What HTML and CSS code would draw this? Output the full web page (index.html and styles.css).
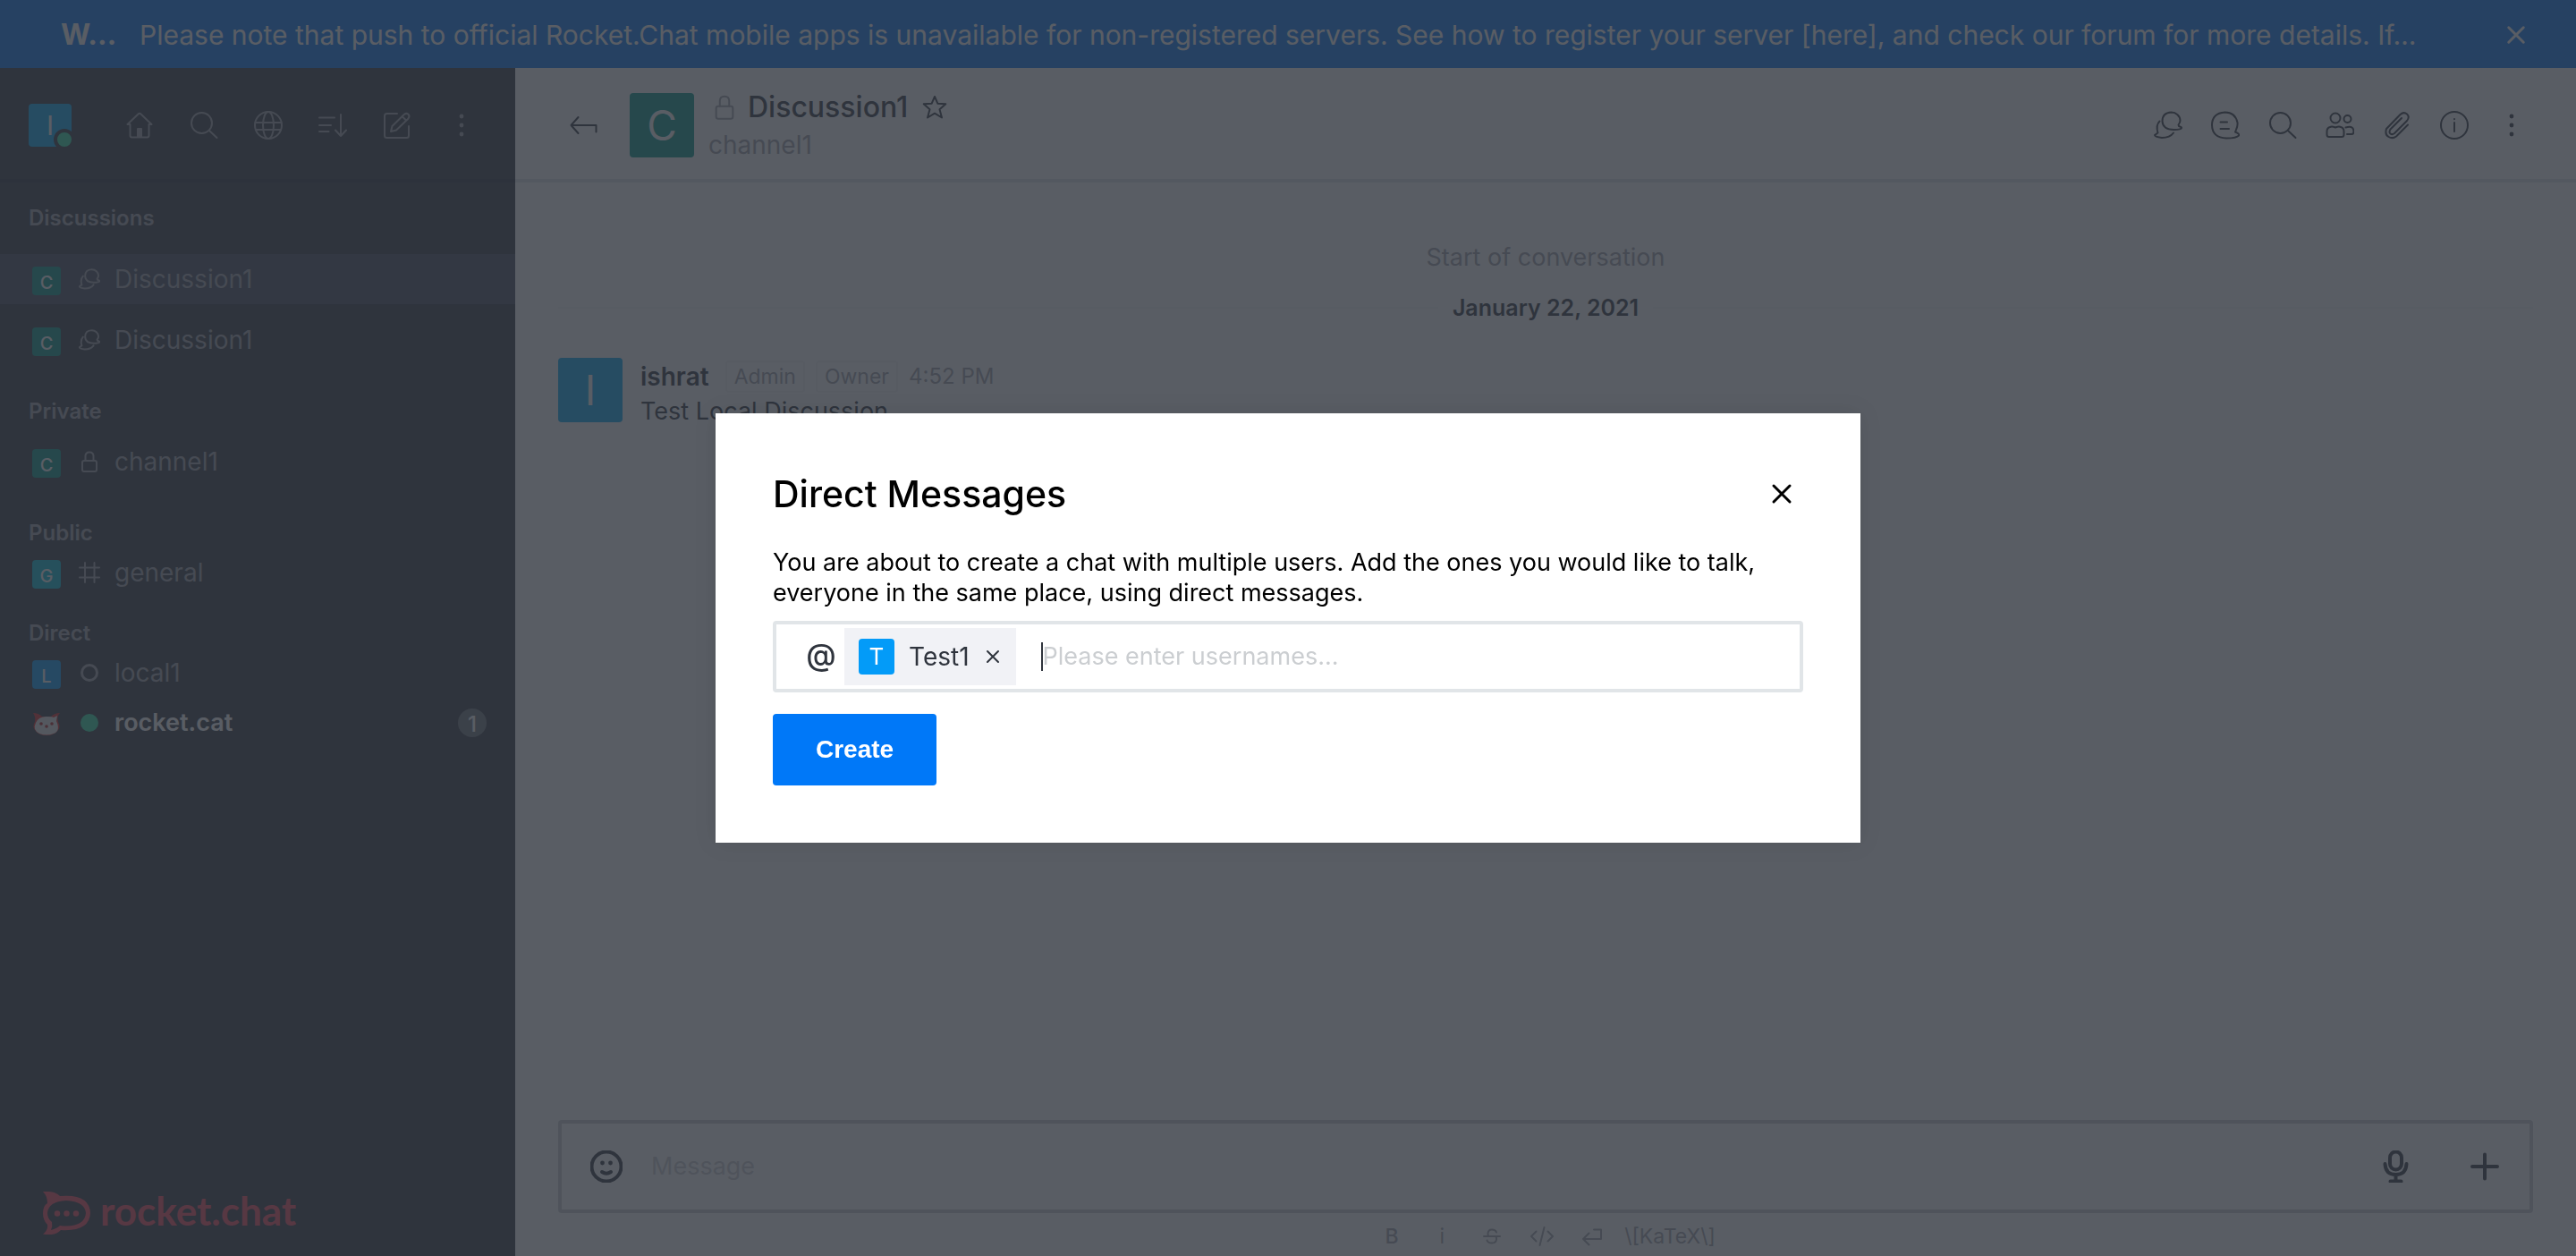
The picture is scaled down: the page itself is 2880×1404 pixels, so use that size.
FILE: index.html
```html
<!DOCTYPE html>
<html lang="en">
<head>
<meta charset="utf-8">
<title>Discussion1 - Rocket.Chat</title>
<link rel="stylesheet" href="styles.css">
</head>
<body>
<svg class="sprite" aria-hidden="true">
  <symbol id="i-home" viewBox="0 0 32 32"><path d="M5.500 15H2.500L14.500 3.500q1.500-1.400 3 0L29.500 15h-3v12.500q0 2-2 2h-17q-2 0-2-2z"/><path d="M14 29v-9h4v9z" fill="currentColor"/></symbol>
  <symbol id="i-search" viewBox="0 0 32 32"><circle cx="13.500" cy="13.500" r="11.500"/><path d="M22 22l8.500 8"/></symbol>
  <symbol id="i-globe" viewBox="0 0 32 32"><circle cx="16" cy="16" r="15"/><ellipse cx="16" cy="16" rx="6" ry="15"/><path d="M1.500 13H30.500M2 21H30"/></symbol>
  <symbol id="i-sort" viewBox="0 0 32 32"><path d="M1 7.500H18M1 16H14M1 23H11.500M25 4V28M19 21.500L25 28l6-6.500"/></symbol>
  <symbol id="i-edit" viewBox="0 0 32 32"><path d="M16 3H4.500Q2 3 2 5.500v22Q2 30 4.500 30h22q2.500 0 2.500-2.500V17"/><path d="M9 23l1.500-6L24 3.800q2.500-1.800 4.500 0t0 4.700L15 21.500zM22 6.500l4 4"/></symbol>
  <symbol id="i-kebab" viewBox="0 0 32 32"><g fill="currentColor" stroke="none"><circle cx="16" cy="6" r="2.400"/><circle cx="16" cy="16" r="2.400"/><circle cx="16" cy="26" r="2.400"/></g></symbol>
  <symbol id="i-chat" viewBox="0 0 32 32"><path d="M27.500 15.500Q29.500 13 29.500 10.800A10 9.500 0 0 0 19.500 1.500Q9.500 2 9.500 11.500q.5 9.500 13 9.500 8 0 8.500-2 0-1-3-2z"/><path d="M6.500 11.500Q2 16 4.500 24.500l-3.500 2.500q0 2 8 3 9 0 13-5.500"/></symbol>
  <symbol id="i-thread" viewBox="0 0 32 32"><path d="M28 21Q30 17 29.500 13 27 1.500 15.500 1.500 1 2.500 1 16 1.500 30 17 30.500q12 0 14.500-3.500 0-1.500-4.500-3.500zM10.500 12.500h7.500M10.500 20h9.500"/></symbol>
  <symbol id="i-team" viewBox="0 0 32 32"><circle cx="11" cy="8" r="5.500"/><circle cx="24.500" cy="9" r="4"/><path d="M5 18q2-1 6 .5 4-1.500 6-.5 3.500 1 3.500 5v3.500q0 2.500-2.500 2.500H4q-2.500 0-2.500-2.500V23q0-4 3.500-5zM22.500 18.500q5-1.500 7 0t2 4.500q0 3-2.500 3H24"/></symbol>
  <symbol id="i-clip" viewBox="0 0 32 32"><path d="M28 15.500L15 28.500Q11 31.500 6.500 29T4 20L19.500 4q4-3.500 7.500-.5t0 7.500L13 25q-2.500 2-4.500.5t0-5L21 8"/></symbol>
  <symbol id="i-info" viewBox="0 0 32 32"><circle cx="16" cy="16" r="15"/><path d="M16 13v10M16 9v.2"/></symbol>
  <symbol id="i-lock" viewBox="0 0 24 24"><rect x="4" y="11" width="16" height="12" rx="2"/><path d="M7.500 11V6q0-4.500 4.500-4.500T16.500 6v5"/></symbol>
  <symbol id="i-hash" viewBox="0 0 24 24"><path d="M7 1v22M17.500 1v22M1 6.500h22M1 17.500h22"/></symbol>
  <symbol id="i-cross" viewBox="0 0 24 24"><path d="M3 3l18 18M21 3L3 21"/></symbol>
  <symbol id="i-back" viewBox="0 0 32 32"><path d="M10.500 7L2.500 16l8 9M2.500 16H30.500v7.500"/></symbol>
  <symbol id="i-star" viewBox="0 0 28 28"><path d="M14 2l3.300 7.700 9 .5-6.800 6 2.500 9.300-8-4.800-8 4.800 2.500-9.300-6.800-6 9-.5z"/></symbol>
  <symbol id="i-smile" viewBox="0 0 36 36"><circle cx="18" cy="18" r="16.500"/><path d="M13 24q5 3.500 10 0"/><g fill="currentColor" stroke="none"><circle cx="13.500" cy="14" r="2.400"/><circle cx="22.500" cy="14" r="2.400"/></g></symbol>
  <symbol id="i-mic" viewBox="0 0 36 36"><rect x="12" y="1.500" width="13" height="20" rx="6.500"/><path d="M6.500 15q.5 12 12 12t12-12M18.500 27v7M12.500 34.500h12"/></symbol>
  <symbol id="i-plus" viewBox="0 0 36 36"><path d="M18 4.500v27M4 18h28"/></symbol>
  <symbol id="i-code" viewBox="0 0 28 24"><path d="M7.500 6.500L2 12l5.500 5.500M20.500 6.500L26 12l-5.500 5.500M16.500 2l-5 20"/></symbol>
  <symbol id="i-enter" viewBox="0 0 24 24"><path d="M14 4.500h8V15H2M8.500 8.500L2 15l6.500 6.500"/></symbol>
  <symbol id="i-strike" viewBox="0 0 20 20"><path d="M15 5.500Q14 2.500 10 2.500T5.500 6.500 9 10M4.500 14.500q1 3 5.500 3t5-4-2.500-3.500M1 10h18"/></symbol>
</svg>

<div class="app">
  <div class="banner" role="status">
    <strong>W…</strong>
    <p>Please note that push to official Rocket.Chat mobile apps is unavailable for non-registered servers. See how to register your server [here], and check our forum for more details. If…</p>
    <button class="icon-btn" aria-label="Close banner"><svg class="ico ico-close"><use href="#i-cross"/></svg></button>
  </div>

  <div class="body">
    <aside class="sidebar">
      <header class="side-head">
        <div class="me"><span class="avatar avatar-48 blue">I</span><i class="presence"></i></div>
        <nav class="side-tools">
          <button class="icon-btn" aria-label="Home"><svg class="ico ico-32"><use href="#i-home"/></svg></button>
          <button class="icon-btn" aria-label="Search"><svg class="ico ico-32"><use href="#i-search"/></svg></button>
          <button class="icon-btn" aria-label="Directory"><svg class="ico ico-32"><use href="#i-globe"/></svg></button>
          <button class="icon-btn" aria-label="Sort"><svg class="ico ico-32"><use href="#i-sort"/></svg></button>
          <button class="icon-btn" aria-label="Create new"><svg class="ico ico-32"><use href="#i-edit"/></svg></button>
          <button class="icon-btn" aria-label="Options"><svg class="ico ico-32"><use href="#i-kebab"/></svg></button>
        </nav>
      </header>

      <div class="rooms">
        <section class="group first">
          <h3>Discussions</h3>
          <a class="room active" href="#d1"><span class="avatar avatar-32 teal">C</span><svg class="ico ico-24"><use href="#i-chat"/></svg><span>Discussion1</span></a>
          <a class="room" href="#d2"><span class="avatar avatar-32 teal">C</span><svg class="ico ico-24"><use href="#i-chat"/></svg><span>Discussion1</span></a>
        </section>
        <section class="group wide">
          <h3 class="spaced">Private</h3>
          <a class="room" href="#c1"><span class="avatar avatar-32 teal">C</span><svg class="ico ico-24"><use href="#i-lock"/></svg><span>channel1</span></a>
        </section>
        <section class="group wide">
          <h3>Public</h3>
          <a class="room" href="#general"><span class="avatar avatar-32 cyan">G</span><svg class="ico ico-24"><use href="#i-hash"/></svg><span>general</span></a>
        </section>
        <section class="group">
          <h3>Direct</h3>
          <a class="room" href="#local1"><span class="avatar avatar-32 azure">L</span><i class="dot offline"></i><span>local1</span></a>
          <a class="room unread" href="#cat">
            <svg class="cat" viewBox="0 0 32 32"><path d="M1 3q6 0 10 4h10q4-4 10-4-4 4-2 10 3 6 0 9-4 6-13 6t-13-6q-3-4 0-9 1-6-2-10z" fill="#db2323"/><path d="M16 7q6 0 8 1l4-2-1 6q5 11-3 14-8 3-16 0-8-4-4-12 3-7 12-7z" fill="#e6e6e6"/><g fill="#b31e1e"><circle cx="10" cy="15" r="1.800"/><circle cx="16" cy="18" r="1.800"/><circle cx="22" cy="15" r="1.800"/></g></svg>
            <i class="dot online"></i><span>rocket.cat</span><b class="badge">1</b></a>
        </section>
      </div>

      <footer class="brand">
        <svg viewBox="0 0 54 48"><path d="M0 0q13-1 19 5Q52 2 53 24 52 45 20 43 13 50 0 47.500 6 43 5 37 0 32 0 24T5 13Q5 5 0 0z" fill="currentColor"/><path d="M26 10q21 1 22 14-1 14-22 14.500-3 0-7-.5-3 3-10 5 2-4 1-9-5-4-5-10 1-13 21-14z" fill="#2f343d"/><g fill="currentColor"><circle cx="16" cy="24.500" r="3.200"/><circle cx="26.500" cy="24.500" r="3.200"/><circle cx="37" cy="24.500" r="3.200"/></g></svg>
        <span>rocket.chat</span>
      </footer>
    </aside>

    <main class="main">
      <header class="room-head">
        <button class="icon-btn back" aria-label="Back to channel"><svg class="ico ico-32"><use href="#i-back"/></svg></button>
        <span class="avatar avatar-72 teal">C</span>
        <div class="room-title">
          <h1><svg class="ico ico-28 muted"><use href="#i-lock"/></svg><span>Discussion1</span><button class="icon-btn" aria-label="Favorite"><svg class="ico ico-28"><use href="#i-star"/></svg></button></h1>
          <a href="#c1">channel1</a>
        </div>
        <nav class="room-tools">
          <button class="icon-btn" aria-label="Discussions"><svg class="ico ico-32"><use href="#i-chat"/></svg></button>
          <button class="icon-btn" aria-label="Threads"><svg class="ico ico-32"><use href="#i-thread"/></svg></button>
          <button class="icon-btn" aria-label="Search messages"><svg class="ico ico-32"><use href="#i-search"/></svg></button>
          <button class="icon-btn" aria-label="Members"><svg class="ico ico-32"><use href="#i-team"/></svg></button>
          <button class="icon-btn" aria-label="Files"><svg class="ico ico-32"><use href="#i-clip"/></svg></button>
          <button class="icon-btn" aria-label="Room information"><svg class="ico ico-32"><use href="#i-info"/></svg></button>
          <button class="icon-btn" aria-label="More"><svg class="ico ico-32"><use href="#i-kebab"/></svg></button>
        </nav>
      </header>

      <div class="messages">
        <p class="start">Start of conversation</p>
        <div class="day"><span>January 22, 2021</span></div>
        <article class="message">
          <span class="avatar avatar-72 blue">I</span>
          <div>
            <div class="meta"><strong>ishrat</strong><span class="tag">Admin</span><span class="tag">Owner</span><time>4:52 PM</time></div>
            <p>Test Local Discussion</p>
          </div>
        </article>
      </div>

      <footer class="composer">
        <div class="compose-box">
          <button class="icon-btn" aria-label="Emoji"><svg class="ico ico-36"><use href="#i-smile"/></svg></button>
          <input type="text" placeholder="Message" aria-label="Message">
          <button class="icon-btn" aria-label="Record audio"><svg class="ico ico-36"><use href="#i-mic"/></svg></button>
          <button class="icon-btn plus" aria-label="Add"><svg class="ico ico-36"><use href="#i-plus"/></svg></button>
        </div>
        <div class="format">
          <button aria-label="Bold"><b>B</b></button>
          <button aria-label="Italic">i</button>
          <button aria-label="Strike"><svg class="ico ico-20"><use href="#i-strike"/></svg></button>
          <button aria-label="Code"><svg class="ico ico-28"><use href="#i-code"/></svg></button>
          <button aria-label="Multi line"><svg class="ico ico-24"><use href="#i-enter"/></svg></button>
          <a class="katex" href="#katex">\[KaTeX\]</a>
        </div>
      </footer>
    </main>
  </div>
</div>

<div class="overlay">
  <form class="modal" role="dialog" aria-labelledby="dm-title">
    <header><h2 id="dm-title">Direct Messages</h2><button type="button" class="icon-btn" aria-label="Close"><svg class="ico ico-24"><use href="#i-cross"/></svg></button></header>
    <label for="users">You are about to create a chat with multiple users. Add the ones you would like to talk, everyone in the same place, using direct messages.</label>
    <div class="user-box">
      <span class="at">@</span>
      <span class="chip"><span class="avatar avatar-40 azure">T</span><span>Test1</span><button type="button" class="icon-btn" aria-label="Remove Test1"><svg class="ico ico-x"><use href="#i-cross"/></svg></button></span>
      <i class="caret"></i>
      <input id="users" type="text" placeholder="Please enter usernames...">
    </div>
    <button type="button" class="create">Create</button>
  </form>
</div>
</body>
</html>
```

FILE: styles.css
```css
*, *::before, *::after { box-sizing: border-box; }
body, h1, h2, h3, p { margin: 0; }
body { font: 400 28px/36px Inter, "Liberation Sans", sans-serif; color: #2f343d; background: #fff; }
a { color: inherit; text-decoration: none; }
button, input { font: inherit; color: inherit; border: 0; background: none; padding: 0; margin: 0; outline: 0; }
input { font-size: 27px; }
input::placeholder { color: #cbced1; opacity: 1; }

.sprite { position: absolute; width: 0; height: 0; }
.sprite path, .sprite circle, .sprite rect, .sprite ellipse { vector-effect: non-scaling-stroke; }
.ico { display: block; flex: none; fill: none; stroke: currentColor; stroke-width: 2; stroke-linecap: round; stroke-linejoin: round; overflow: visible; }
.ico-20 { width: 20px; height: 20px; }
.ico-24 { width: 24px; height: 24px; }
.ico-28 { width: 28px; height: 28px; }
.ico-32 { width: 32px; height: 32px; }
.ico-36 { width: 36px; height: 36px; stroke-width: 4; }
.ico-x { width: 16px; height: 16px; }
.ico-close { width: 22px; height: 22px; stroke-width: 3; }
.icon-btn { display: grid; place-items: center; flex: none; }
.muted { color: #9ea2a8; }

.avatar { display: grid; place-items: center; flex: none; border-radius: 4px; color: #fff; }
.avatar-32 { width: 32px; height: 32px; font-size: 20px; font-weight: 500; }
.avatar-40 { width: 40px; height: 40px; font-size: 26px; }
.avatar-48 { width: 48px; height: 48px; font-size: 30px; }
.avatar-72 { width: 72px; height: 72px; font-size: 46px; }
.blue { background: #03a9f4; }
.teal { background: #009688; }
.cyan { background: #00bcd4; }
.azure { background: #039bf8; }

.app { display: flex; flex-direction: column; height: 100vh; }
.body { display: flex; flex: 1; min-height: 0; }

.banner { display: flex; align-items: center; height: 76px; flex: none; padding: 2px 56px 0 68px; background: #0076f6; color: #fff; font-size: 30px; line-height: 40px; }
.banner strong { width: 88px; flex: none; font-size: 32px; }
.banner p { flex: 1; min-width: 0; white-space: nowrap; }
.banner .icon-btn { margin-left: 52px; }

.sidebar { display: flex; flex-direction: column; width: 576px; flex: none; background: #2f343d; color: #9ea2a8; }
.side-head { display: flex; align-items: center; height: 128px; padding: 4px 24px 0 32px; border-bottom: 4px solid #262b3a; }
.me { position: relative; }
.presence { position: absolute; right: -4px; bottom: -4px; width: 24px; height: 24px; border: 4px solid #2f343d; border-radius: 50%; background: #2de0a5; }
.side-tools { display: flex; margin-left: 40px; }
.side-tools .icon-btn { width: 72px; height: 56px; }
.rooms { flex: 1; padding-top: 24px; }
.group { margin-top: 24px; }
.group h3 { padding: 0 32px; font-size: 24px; line-height: 32px; font-weight: 600; }
.group.wide { margin-top: 36px; }
.group .spaced { margin-bottom: 12px; }
.group.first { margin-top: 0; }
.first h3 { margin-bottom: 24px; }
.first .room + .room { margin-top: 12px; }
.room { display: flex; align-items: center; height: 56px; padding: 0 32px 0 36px; }
.room .avatar, .cat { margin-top: 4px; }
.room .ico { margin: 0 16px 0 20px; }
.active { background: #414859; }
.dot { width: 20px; height: 20px; border-radius: 50%; margin: 0 18px 0 22px; }
.offline { border: 3px solid #9ea2a8; }
.online { background: #2de0a5; }
.cat { width: 32px; height: 32px; flex: none; }
.unread { color: #fff; font-size: 27px; font-weight: 600; }
.badge { display: grid; place-items: center; width: 32px; height: 32px; margin-left: auto; border-radius: 50%; background: #6c727a; font-size: 24px; font-weight: 500; }
.brand { display: flex; align-items: center; gap: 10px; height: 96px; padding: 0 48px; color: #f5455c; font: 700 44px/48px Lato, sans-serif; }
.brand svg { width: 54px; height: 48px; }
.brand span { padding-bottom: 6px; }

.main { display: flex; flex-direction: column; flex: 1; min-width: 0; }
.room-head { display: flex; align-items: center; height: 128px; flex: none; padding: 4px 40px 0 56px; border-bottom: 4px solid #e1e5e8; }
.room-head .back { width: 40px; margin-right: 32px; }
.room-title { margin-left: 16px; }
.room-title h1 { display: flex; align-items: center; font-size: 32px; line-height: 40px; font-weight: 500; }
.room-title h1 span { margin: 0 16px 0 12px; }
.room-title h1 .muted { margin-left: 4px; }
.room-title a { display: block; margin-top: 4px; color: #9ea2a8; }
.room-tools { display: flex; margin-left: auto; }
.room-tools .icon-btn { width: 64px; height: 64px; }

.messages { flex: 1; padding: 66px 48px 0; font-size: 27px; }
.start { text-align: center; color: #9ea2a8; }
.day { display: flex; align-items: center; margin-top: 20px; font-size: 25px; font-weight: 600; }
.day::before, .day::after { content: ""; flex: 1; height: 2px; background: #f6f7f9; }
.day span { padding: 0 16px; }
.message { display: flex; gap: 20px; margin-top: 38px; }
.meta { display: flex; align-items: center; height: 42px; }
.meta strong { font-size: 28px; font-weight: 600; margin-right: 18px; }
.tag { padding: 0 8px; margin-right: 12px; border: 2px solid #f3f4f6; border-radius: 4px; color: #9ea2a8; font-size: 23px; line-height: 32px; }
.meta time { color: #9ea2a8; font-size: 24px; }

.composer { padding: 0 48px; }
.compose-box { display: flex; align-items: center; height: 104px; padding: 0 32px; border: 4px solid #cbced1; border-radius: 4px; }
.compose-box input { flex: 1; min-width: 0; margin: 0 32px; }
.compose-box .plus { margin-left: 64px; }
.format { display: flex; align-items: center; justify-content: center; height: 48px; padding: 4px 10px 0 0; color: #9ea2a8; font-size: 23px; }
.format button { display: grid; place-items: center; width: 56px; }
.format b { font-weight: 500; }
.katex { margin-left: 8px; }

.overlay { position: fixed; inset: 0; display: grid; place-items: center; background: rgba(47, 52, 61, .8); }
.modal { width: 1280px; padding: 64px; background: #fff; color: #000; box-shadow: 0 0 24px rgba(0, 0, 0, .1); }
.modal header { display: flex; align-items: center; justify-content: space-between; height: 52px; padding-right: 12px; }
.modal h2 { font-size: 41px; line-height: 52px; font-weight: 500; }
.modal header .ico { stroke-width: 3; }
.modal label { display: block; margin-top: 34px; font-size: 27px; line-height: 34px; }
.user-box { display: flex; align-items: center; height: 80px; margin-top: 14px; padding: 0 24px; border: 4px solid #e1e5e8; border-radius: 4px; color: #2f343d; }
.at { width: 52px; flex: none; padding-bottom: 4px; text-align: center; font-size: 34px; font-weight: 500; }
.chip { display: flex; align-items: center; height: 64px; padding: 0 18px 0 16px; background: #f1f2f6; }
.chip .avatar { margin-right: 16px; }
.chip .icon-btn { margin-left: 18px; }
.caret { width: 2px; height: 32px; margin-left: 28px; background: #2f343d; }
.user-box input { flex: 1; min-width: 0; }
.create { display: block; height: 80px; margin-top: 24px; padding: 0 48px; border-radius: 4px; background: #0078f8; color: #fff; font: 700 28px/36px "Liberation Sans", sans-serif; }
```
